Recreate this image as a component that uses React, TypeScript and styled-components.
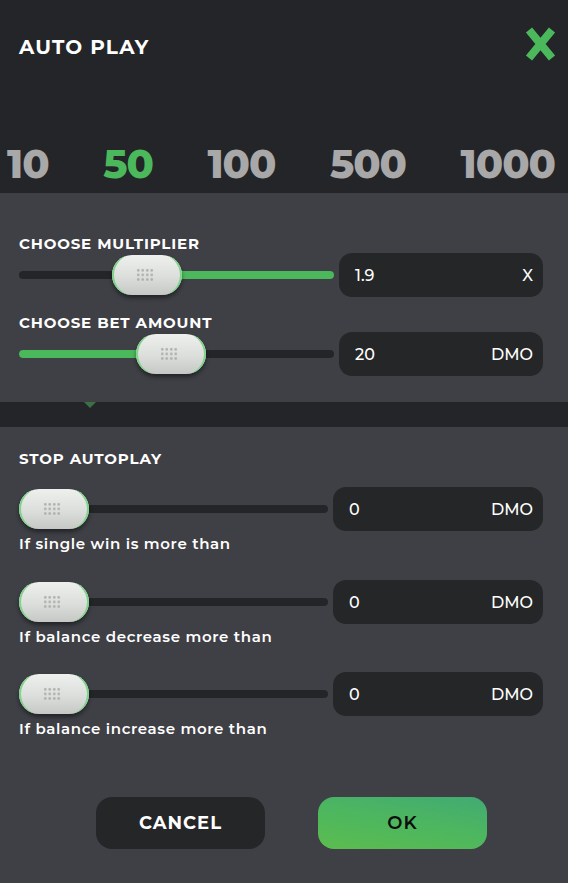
import React from "react";
import styled, { createGlobalStyle } from "styled-components";

const Global = createGlobalStyle`
  html, body { margin: 0; padding: 0; background: #3f4046; }
  body { font-family: "Montserrat", "Open Sans", "Noto Sans", sans-serif; }
  * { box-sizing: border-box; }
`;

const Page = styled.div`
  width: 568px;
  height: 883px;
  background: #3f4046;
  display: flex;
  flex-direction: column;
  overflow: hidden;
`;

const Header = styled.div`
  background: #242528;
  height: 193px;
  display: flex;
  flex-direction: column;
`;

const TitleRow = styled.div`
  height: 94px;
  display: flex;
  align-items: center;
  justify-content: space-between;
  padding: 0 12px 0 19px;
`;

const Title = styled.h1`
  margin: 0;
  color: #ffffff;
  font-size: 20px;
  font-weight: 700;
  letter-spacing: 1.2px;
`;

const CloseButton = styled.button`
  border: 0;
  background: transparent;
  padding: 0;
  width: 32px;
  height: 36px;
  display: flex;
  align-items: center;
  justify-content: center;
  cursor: pointer;
  margin-top: -6px;
`;

const Numbers = styled.div`
  margin-top: 39px;
  height: 60px;
  display: flex;
  align-items: center;
  justify-content: space-between;
  padding: 0 13px 0 7px;
`;

const Num = styled.span<{ $active?: boolean }>`
  font-size: 40px;
  font-weight: 800;
  letter-spacing: -1px;
  color: ${(p) => (p.$active ? "#4cb85c" : "#a8a8a8")};
`;

const Section = styled.div<{ $pt: number; $pb: number }>`
  padding: ${(p) => p.$pt}px 25px ${(p) => p.$pb}px 19px;
  display: flex;
  flex-direction: column;
`;

const Label = styled.div<{ $mt?: number }>`
  color: #ffffff;
  font-size: 15px;
  font-weight: 700;
  line-height: 18px;
  letter-spacing: 0.85px;
  margin-top: ${(p) => p.$mt ?? 0}px;
`;

const SubLabel = styled.div<{ $mt?: number }>`
  color: #ffffff;
  font-size: 15px;
  font-weight: 600;
  line-height: 18px;
  letter-spacing: 0.65px;
  margin-top: ${(p) => p.$mt ?? 0}px;
`;

const Row = styled.div<{ $mt?: number; $gap: number }>`
  display: flex;
  align-items: center;
  gap: ${(p) => p.$gap}px;
  height: 44px;
  margin-top: ${(p) => p.$mt ?? 0}px;
`;

const Track = styled.div`
  position: relative;
  flex: 1;
  height: 8px;
  border-radius: 4px;
  background: #242528;
`;

const Fill = styled.div`
  position: absolute;
  top: 0;
  bottom: 0;
  border-radius: 4px;
  background: #4cb85c;
`;

const Thumb = styled.div`
  position: absolute;
  top: 50%;
  width: 70px;
  height: 40px;
  margin-top: -20px;
  border-radius: 20px;
  background: linear-gradient(180deg, #eef0ee 0%, #dcdedc 55%, #c6c8c6 100%);
  box-shadow:
    inset 3px 0 0 -1px #7fd38a,
    inset -3px 0 0 -1px #7fd38a,
    0 3px 4px rgba(0, 0, 0, 0.45);
  display: flex;
  align-items: center;
  justify-content: center;
`;

const Dots = styled.div`
  width: 18px;
  height: 14px;
  background-image: radial-gradient(circle, #aeb1ae 1.1px, transparent 1.5px);
  background-size: 4.5px 4.6px;
  margin-left: -4px;
`;

const InputBox = styled.div<{ $w: number }>`
  width: ${(p) => p.$w}px;
  height: 44px;
  flex: none;
  border-radius: 13px;
  background: #252628;
  display: flex;
  align-items: center;
  justify-content: space-between;
  padding: 0 10px 0 16px;
  color: #ffffff;
  font-size: 16px;
  font-weight: 500;
`;

const Unit = styled.span`
  font-size: 16px;
  font-weight: 500;
  color: #ffffff;
`;

const Band = styled.div`
  position: relative;
  height: 25px;
  background: #242528;
`;

const Pointer = styled.div`
  position: absolute;
  top: 0;
  left: 84px;
  width: 0;
  height: 0;
  border-left: 6px solid transparent;
  border-right: 6px solid transparent;
  border-top: 6px solid #3c7044;
`;

const Buttons = styled.div`
  display: flex;
  gap: 53px;
  padding-left: 96px;
  margin-top: 59px;
`;

const Btn = styled.button<{ $primary?: boolean }>`
  width: 169px;
  height: 52px;
  border: 0;
  border-radius: 16px;
  font-family: inherit;
  font-size: 18px;
  font-weight: ${(p) => (p.$primary ? 600 : 700)};
  letter-spacing: 1px;
  color: ${(p) => (p.$primary ? "#0c0c0c" : "#fff")};
  background: ${(p) =>
    p.$primary ? "linear-gradient(190deg, #42aa73 0%, #4db75f 50%, #5cbc4e 100%)" : "#252628"};
  cursor: pointer;
`;

type SliderProps = { value: number; fillFrom: "left" | "right" };

const Slider: React.FC<SliderProps> = ({ value, fillFrom }) => (
  <Track>
    {fillFrom === "left" ? (
      <Fill style={{ left: 0, width: `${value}%` }} />
    ) : (
      <Fill style={{ left: `${value}%`, right: 0 }} />
    )}
    <Thumb style={{ left: `calc(${value}% - ${(value / 100) * 70}px)` }}>
      <Dots />
    </Thumb>
  </Track>
);

const CloseIcon = () => (
  <svg width="31" height="34" viewBox="0 0 31 34">
    <path d="M4 3 L27 31 M27 3 L4 31" stroke="#4cb85c" strokeWidth="8" strokeLinecap="butt" />
  </svg>
);

export default function App() {
  const bets = ["10", "50", "100", "500", "1000"];
  const stops = ["If single win is more than", "If balance decrease more than", "If balance increase more than"];
  return (
    <>
      <Global />
      <Page>
        <Header>
          <TitleRow>
            <Title>AUTO PLAY</Title>
            <CloseButton aria-label="close">
              <CloseIcon />
            </CloseButton>
          </TitleRow>
          <Numbers>
            {bets.map((b) => (
              <Num key={b} $active={b === "50"}>
                {b}
              </Num>
            ))}
          </Numbers>
        </Header>

        <Section $pt={42} $pb={26}>
          <Label>CHOOSE MULTIPLIER</Label>
          <Row $gap={5}>
            <Slider value={38} fillFrom="right" />
            <InputBox $w={204}>
              <span>1.9</span>
              <Unit>X</Unit>
            </InputBox>
          </Row>
          <Label $mt={17}>CHOOSE BET AMOUNT</Label>
          <Row $gap={5}>
            <Slider value={47.8} fillFrom="left" />
            <InputBox $w={204}>
              <span>20</span>
              <Unit>DMO</Unit>
            </InputBox>
          </Row>
        </Section>

        <Band>
          <Pointer />
        </Band>

        <Section $pt={23} $pb={0}>
          <Label>STOP AUTOPLAY</Label>
          {stops.map((s, i) => (
            <React.Fragment key={s}>
              <Row $gap={5} $mt={i === 0 ? 19 : i === 1 ? 27 : 26}>
                <Slider value={0} fillFrom="left" />
                <InputBox $w={210}>
                  <span>0</span>
                  <Unit>DMO</Unit>
                </InputBox>
              </Row>
              <SubLabel $mt={4}>{s}</SubLabel>
            </React.Fragment>
          ))}
        </Section>

        <Buttons>
          <Btn>CANCEL</Btn>
          <Btn $primary>OK</Btn>
        </Buttons>
      </Page>
    </>
  );
}
